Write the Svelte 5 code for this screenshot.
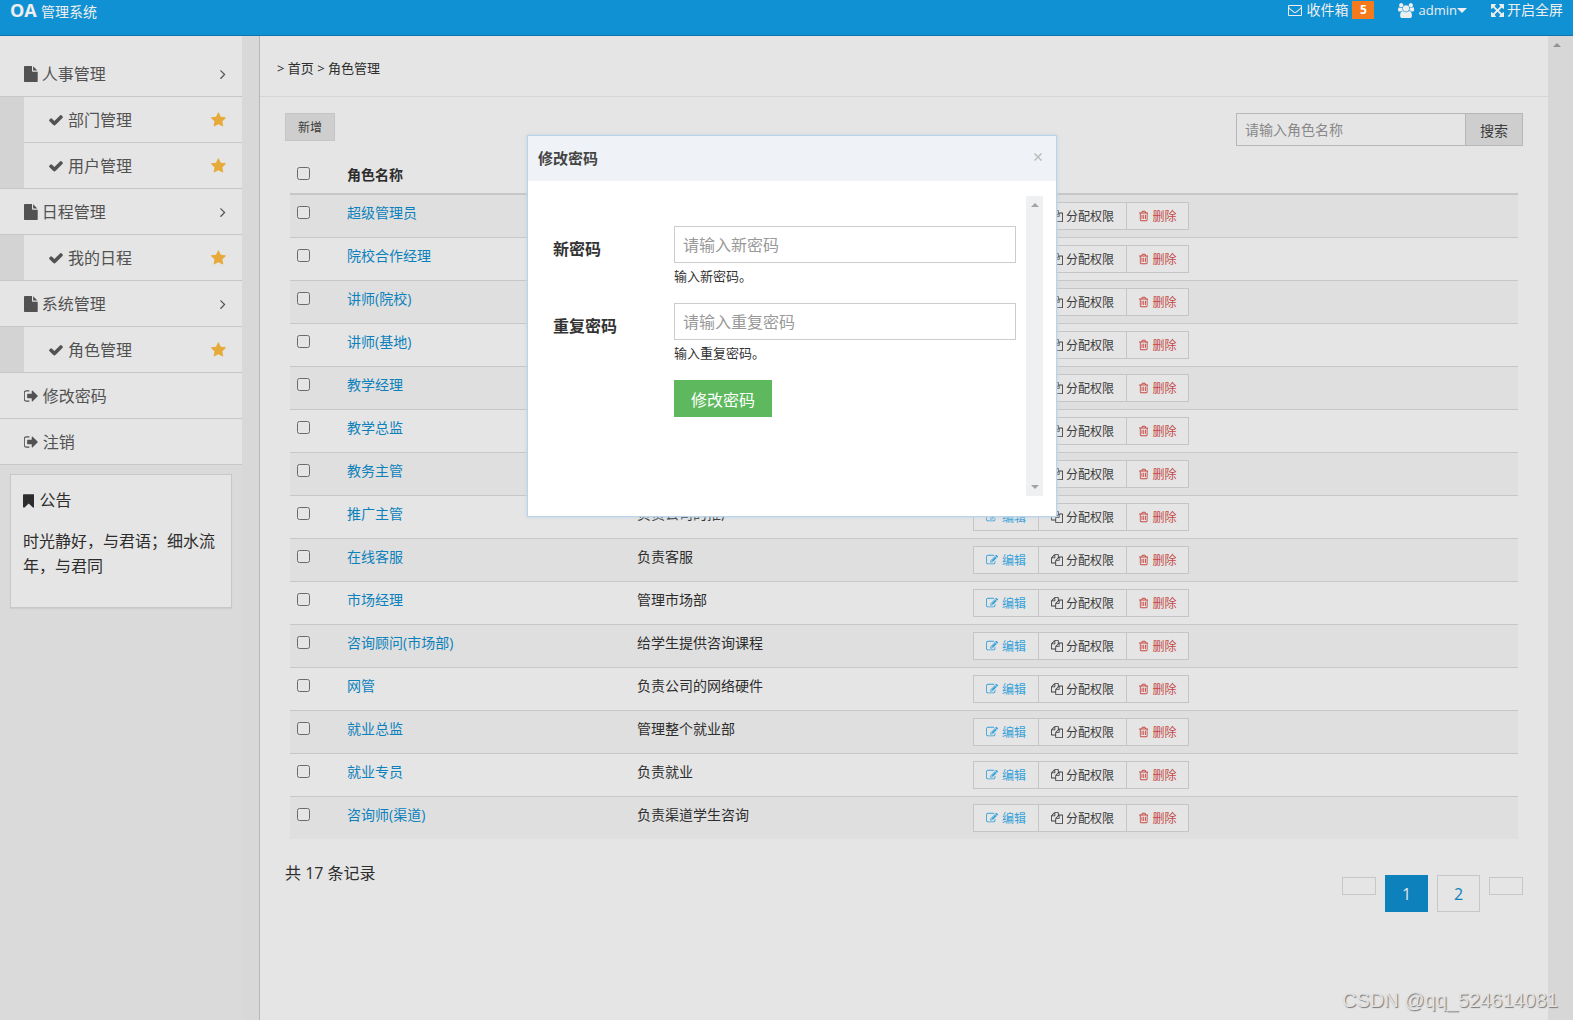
<script>
  const icons = {
    file: ['128 0 1536 1792', 'M1152 512v-472q22 14 36 28l408 408q14 14 28 36h-472zm-128 32q0 40 28 68t68 28h544v1056q0 40-28 68t-68 28h-1344q-40 0-68-28t-28-68v-1600q0-40 28-68t68-28h800v544z'],
    check: ['0 0 1792 1792', 'M1671 566q0 40-28 68l-724 724-136 136q-28 28-68 28t-68-28l-136-136-362-362q-28-28-28-68t28-68l136-136q28-28 68-28t68 28l294 295 656-657q28-28 68-28t68 28l136 136q28 28 28 68z'],
    star: ['64 0 1664 1792', 'M1728 647q0 22-26 48l-363 354 86 500q1 7 1 20 0 21-10.5 35.5t-30.5 14.5q-19 0-40-12l-449-236-449 236q-22 12-40 12-21 0-31.5-14.5t-10.5-35.5q0-6 2-20l86-500-364-354q-25-27-25-48 0-37 56-46l502-73 225-455q19-41 49-41t49 41l225 455 502 73q56 9 56 46z'],
    angle: ['576 0 640 1792', 'M1171 960q0 13-10 23l-466 466q-10 10-23 10t-23-10l-50-50q-10-10-10-23t10-23l393-393-393-393q-10-10-10-23t10-23l50-50q10-10 23-10t23 10l466 466q10 10 10 23z'],
    signout: ['96 0 1664 1792', 'M704 1440q0 4 1 20t.5 26.5-3 23.5-10 19.5-20.5 6.5h-320q-119 0-203.5-84.5t-84.5-203.5v-704q0-119 84.5-203.5t203.5-84.5h320q13 0 22.5 9.5t9.5 22.5q0 4 1 20t.5 26.5-3 23.5-10 19.5-20.5 6.5h-320q-66 0-113 47t-47 113v704q0 66 47 113t113 47h312l11.5 1 11.5 3 8 5.5 7 9 2 13.5zm928-544q0 26-19 45l-544 544q-19 19-45 19t-45-19-19-45v-288h-448q-26 0-45-19t-19-45v-384q0-26 19-45t45-19h448v-288q0-26 19-45t45-19 45 19l544 544q19 19 19 45z'],
    bookmark: ['256 0 1280 1792', 'M1420 128q23 0 44 9 33 13 52.5 41t19.5 62v1289q0 34-19.5 62t-52.5 41q-19 8-44 8-48 0-83-32l-441-424-441 424q-36 33-83 33-23 0-44-9-33-13-52.5-41t-19.5-62v-1289q0-34 19.5-62t52.5-41q21-9 44-9h1048z'],
    mail: ['0 0 1792 1792', 'M1664 1504v-768q-32 36-69 66-268 206-426 338-51 43-83 67t-86.5 48.5-102.5 24.5h-2q-48 0-102.5-24.5t-86.5-48.5-83-67q-158-132-426-338-37-30-69-66v768q0 13 9.5 22.5t22.5 9.5h1472q13 0 22.5-9.5t9.5-22.5zm0-1051v-24.5l-.5-13-3-12.5-5.5-9-9-7.5-14-2.5h-1472q-13 0-22.5 9.5t-9.5 22.5q0 168 147 284 193 152 401 317 6 5 35 29.5t46 37.5 44.5 31.5 50.5 27.5 43 9h2q20 0 43-9t50.5-27.5 44.5-31.5 46-37.5 35-29.5q208-165 401-317 54-43 100.5-115.5t46.5-131.5zm128-37v1088q0 66-47 113t-113 47h-1472q-66 0-113-47t-47-113v-1088q0-66 47-113t113-47h1472q66 0 113 47t47 113z'],
    expand: ['128 128 1536 1536', 'M1411 541l-355 355 355 355 144-144q29-31 70-14 39 17 39 59v448q0 26-19 45t-45 19h-448q-42 0-59-40-17-39 14-69l144-144-355-355-355 355 144 144q31 30 14 69-17 40-59 40h-448q-26 0-45-19t-19-45v-448q0-42 40-59 39-17 69 14l144 144 355-355-355-355-144 144q-19 19-45 19-12 0-24-5-40-17-40-59v-448q0-26 19-45t45-19h448q42 0 59 40 17 39-14 69l-144 144 355 355 355-355-144-144q-31-30-14-69 17-40 59-40h448q26 0 45 19t19 45v448q0 42-39 59-13 5-25 5-26 0-45-19z'],
    users: ['64 0 1920 1792', 'M657 896q-162 5-265 128h-134q-82 0-138-40.5t-56-118.5q0-353 124-353 6 0 43.5 21t97.5 42.5 119 21.5q67 0 133-23-5 37-5 66 0 159 93 293zm1071 637q0 120-73 189.5t-194 69.5h-874q-121 0-194-69.5t-73-189.5q0-53 3.5-103.5t14-109 26.5-108.5 43-97.5 62-81 85.5-53.5 111.5-20q10 0 43 21.5t73 48 107 48 135 21.5 135-21.5 107-48 73-48 43-21.5q61 0 111.5 20t85.5 53.5 62 81 43 97.5 26.5 108.5 14 109 3.5 103.5zm-1024-1277q0 106-75 181t-181 75-181-75-75-181 75-181 181-75 181 75 75 181zm704 384q0 159-112.5 271.5t-271.5 112.5-271.5-112.5-112.5-271.5 112.5-271.5 271.5-112.5 271.5 112.5 112.5 271.5zm576 225q0 78-56 118.5t-138 40.5h-134q-103-123-265-128 93-134 93-293 0-29-5-66 66 23 133 23 59 0 119-21.5t97.5-42.5 43.5-21q124 0 124 353zm-128-609q0 106-75 181t-181 75-181-75-75-181 75-181 181-75 181 75 75 181z'],
    edit: ['0 0 1792 1792', 'M888 1184l116-116-152-152-116 116v56h96v96h56zm440-720q-16-16-33 1l-350 350q-17 17-1 33t33-1l350-350q17-17 1-33zm80 594v190q0 119-84.5 203.5t-203.5 84.5h-832q-119 0-203.5-84.5t-84.5-203.5v-832q0-119 84.5-203.5t203.5-84.5h832q63 0 117 25 15 7 18 23 3 17-9 29l-49 49q-14 14-32 8-23-6-45-6h-832q-66 0-113 47t-47 113v832q0 66 47 113t113 47h832q66 0 113-47t47-113v-126q0-13 9-22l64-64q15-15 35-7t20 29zm-96-738l288 288-672 672h-288v-288zm444 132l-92 92-288-288 92-92q28-28 68-28t68 28l152 152q28 28 28 68t-28 68z'],
    copy: ['0 0 1792 1792', 'M1696 384q40 0 68 28t28 68v1216q0 40-28 68t-68 28h-960q-40 0-68-28t-28-68v-288h-544q-40 0-68-28t-28-68v-672q0-40 20-88t48-76l408-408q28-28 76-48t88-20h416q40 0 68 28t28 68v328q68-40 128-40h416zm-544 213l-299 299h299v-299zm-640-384l-299 299h299v-299zm196 647l316-316v-416h-384v416q0 40-28 68t-68 28h-416v640h512v-256q0-40 20-88t48-76zm956 804v-1152h-384v416q0 40-28 68t-68 28h-416v640h896z'],
    trash: ['192 0 1408 1792', 'M704 736v576q0 14-9 23t-23 9h-64q-14 0-23-9t-9-23v-576q0-14 9-23t23-9h64q14 0 23 9t9 23zm256 0v576q0 14-9 23t-23 9h-64q-14 0-23-9t-9-23v-576q0-14 9-23t23-9h64q14 0 23 9t9 23zm256 0v576q0 14-9 23t-23 9h-64q-14 0-23-9t-9-23v-576q0-14 9-23t23-9h64q14 0 23 9t9 23zm128 724v-948h-896v948q0 22 7 40.5t14.5 27 10.5 8.5h832q3 0 10.5-8.5t14.5-27 7-40.5zm-672-1076h448l-48-117q-7-9-17-11h-317q-10 2-17 11zm928 32v64q0 14-9 23t-23 9h-96v948q0 83-47 143.5t-113 60.5h-832q-66 0-113-58.5t-47-141.5v-952h-96q-14 0-23-9t-9-23v-64q0-14 9-23t23-9h309l70-167q15-37 54-63t79-26h320q40 0 79 26t54 63l70 167h309q14 0 23 9t9 23z']
  }

  const menu = [
    { titulo: '人事管理', hijos: ['部门管理', '用户管理'] },
    { titulo: '日程管理', hijos: ['我的日程'] },
    { titulo: '系统管理', hijos: ['角色管理'] }
  ]

  const roles = [
    { name: '超级管理员', desc: '' },
    { name: '院校合作经理', desc: '' },
    { name: '讲师(院校)', desc: '' },
    { name: '讲师(基地)', desc: '' },
    { name: '教学经理', desc: '' },
    { name: '教学总监', desc: '' },
    { name: '教务主管', desc: '' },
    { name: '推广主管', desc: '负责公司的推广' },
    { name: '在线客服', desc: '负责客服' },
    { name: '市场经理', desc: '管理市场部' },
    { name: '咨询顾问(市场部)', desc: '给学生提供咨询课程' },
    { name: '网管', desc: '负责公司的网络硬件' },
    { name: '就业总监', desc: '管理整个就业部' },
    { name: '就业专员', desc: '负责就业' },
    { name: '咨询师(渠道)', desc: '负责渠道学生咨询' }
  ]

  let keyword = $state('')
  let password = $state('')
  let repeat = $state('')
  let showModal = $state(true)
</script>

{#snippet icon(name, cls)}
  <svg class="icon {cls}" viewBox={icons[name][0]} aria-hidden="true"><path d={icons[name][1]} /></svg>
{/snippet}

<div class="page">
  <header>
    <div class="brand"><strong>OA</strong> <small>管理系统</small></div>
    <nav class="top">
      <a href="#inbox">{@render icon('mail', 'i14')}收件箱 <span class="badge">5</span></a>
      <a href="#admin">{@render icon('users', 'i15')}<span class="user">admin</span><span class="caret"></span></a>
      <a class="full" href="#full">{@render icon('expand', 'i13')}开启全屏</a>
    </nav>
  </header>

  <div class="body">
    <aside>
      <ul class="menu">
        {#each menu as m}
          <li>
            <a href="#menu">{@render icon('file', 'i16')}{m.titulo}<span class="right">{@render icon('angle', 'i16')}</span></a>
            <ul class="sub">
              {#each m.hijos as h}
                <li><a href="#sub">{@render icon('check', 'i16')}{h}<span class="right star">{@render icon('star', 'i16')}</span></a></li>
              {/each}
            </ul>
          </li>
        {/each}
        <li><a href="#password">{@render icon('signout', 'i16')}修改密码</a></li>
        <li><a href="#logout">{@render icon('signout', 'i16')}注销</a></li>
      </ul>
      <section class="notice">
        <p>{@render icon('bookmark', 'i16')}公告</p>
        <p>时光静好，与君语；细水流年，与君同</p>
      </section>
    </aside>

    <main>
      <div class="crumb">&gt; <a href="#home">首页</a> &gt; <a href="#role">角色管理</a></div>
      <div class="tools">
        <button class="add">新增</button>
        <form class="search">
          <input type="text" aria-label="角色名称" placeholder="请输入角色名称" bind:value={keyword}>
          <button type="button">搜索</button>
        </form>
      </div>

      <table>
        <colgroup><col class="c1"><col class="c2"><col class="c3"><col></colgroup>
        <thead>
          <tr>
            <th><input type="checkbox" aria-label="全选"></th>
            <th>角色名称</th>
            <th></th>
            <th></th>
          </tr>
        </thead>
        <tbody>
          {#each roles as r}
            <tr>
              <td><input type="checkbox" aria-label={r.name}></td>
              <td><a href="#edit">{r.name}</a></td>
              <td>{r.desc}</td>
              <td>
                <div class="group">
                  <button class="edit">{@render icon('edit', 'i12')}编辑</button>
                  <button>{@render icon('copy', 'i12')}分配权限</button>
                  <button class="del">{@render icon('trash', 'i12')}删除</button>
                </div>
              </td>
            </tr>
          {/each}
        </tbody>
      </table>

      <div class="foot">
        <span>共 17 条记录</span>
        <nav class="pages">
          <a class="empty" href="#prev" aria-label="上一页"></a>
          <a class="num active" href="#1">1</a>
          <a class="num" href="#2">2</a>
          <a class="empty" href="#next" aria-label="下一页"></a>
        </nav>
      </div>
    </main>
    <div class="scroll"><span class="up"></span></div>
    <div class="mask"></div>
  </div>

  {#if showModal}
    <div class="modal" role="dialog" aria-label="修改密码">
      <div class="modal-head">
        <strong>修改密码</strong>
        <button class="close" aria-label="关闭" onclick={() => (showModal = false)}>
          <svg viewBox="0 0 8 8"><path d="M0.5 0.5L7.5 7.5M7.5 0.5L0.5 7.5" /></svg>
        </button>
      </div>
      <div class="modal-body">
        <form>
          <label for="pwd">新密码</label>
          <div class="field">
            <input id="pwd" type="password" placeholder="请输入新密码" bind:value={password}>
            <small>输入新密码。</small>
          </div>
          <label for="pwd2">重复密码</label>
          <div class="field">
            <input id="pwd2" type="password" placeholder="请输入重复密码" bind:value={repeat}>
            <small>输入重复密码。</small>
          </div>
          <button type="button" class="submit">修改密码</button>
        </form>
        <div class="track"><span class="up"></span><span class="down"></span></div>
      </div>
    </div>
  {/if}

  <div class="mark">CSDN @qq_524614081</div>
</div>

<style>
  :global(body) {
    margin: 0;
    background: #d9d9d9;
  }

  .page {
    position: relative;
    display: flex;
    flex-direction: column;
    min-height: 100vh;
    font: 16px/26px "Open Sans", "Noto Sans CJK SC", sans-serif;
    color: #333;
  }

  .page :global(*) {
    box-sizing: border-box;
  }

  a {
    color: inherit;
    text-decoration: none;
  }

  ul {
    list-style: none;
    margin: 0;
    padding: 0;
  }

  button, input {
    font-family: inherit;
    border-radius: 0;
    margin: 0;
  }

  .icon {
    flex: none;
    fill: currentColor;
  }

  .i12 { height: 12px; }
  .i13 { height: 13px; }
  .i14 { height: 14px; }
  .i15 { height: 15px; }
  .i16 { height: 16px; }

  header {
    display: flex;
    justify-content: space-between;
    height: 36px;
    padding: 0 10px;
    background: #1091d4;
    border-bottom: 1px solid #0c75ab;
    color: #eee;
  }

  .brand {
    line-height: 20px;
  }

  .brand strong {
    font-size: 18px;
  }

  .brand small {
    font-size: 14px;
  }

  .top {
    display: flex;
    gap: 24px;
    font-size: 14px;
    line-height: 20px;
  }

  .top a {
    display: flex;
    align-items: center;
    gap: 4px;
    height: 20px;
  }

  .top .full {
    gap: 3px;
  }

  .user {
    font-size: 13px;
  }

  .badge {
    width: 22px;
    height: 18px;
    background: #f37b1d;
    color: #fff;
    font-size: 12px;
    font-weight: bold;
    line-height: 18px;
    text-align: center;
  }

  .caret {
    margin-left: -4px;
    border: 5px solid transparent;
    border-top-color: currentColor;
    border-bottom: 0;
  }

  .body {
    position: relative;
    flex: 1;
    display: flex;
    background: #f1f1f1;
  }

  aside {
    flex: none;
    width: 242px;
    background: #f3f3f3;
  }

  .menu {
    padding-top: 15px;
    background: #fff;
    color: #5c5c5c;
  }

  .menu a {
    display: flex;
    align-items: center;
    gap: 4px;
    height: 46px;
    padding: 0 16px 0 24px;
    border-bottom: 1px solid #dedede;
  }

  .sub {
    padding-left: 24px;
    background: #ebebeb;
  }

  .sub a {
    background: #fff;
  }

  .sub li:last-child {
    margin-left: -24px;
    border-bottom: 1px solid #dedede;
  }

  .sub li:last-child a {
    height: 45px;
    margin-left: 24px;
    border-bottom: 0;
  }

  .right {
    display: flex;
    margin-left: auto;
  }

  .star {
    color: #ffbe40;
  }

  .notice {
    margin: 9px 10px 0;
    padding: 13px 12px;
    height: 134px;
    background: #fff;
    border: 1px solid #dedede;
    box-shadow: 0 1px 1px rgba(0, 0, 0, .05);
    line-height: 25px;
  }

  .notice p {
    display: flex;
    gap: 5px;
    align-items: center;
    margin: 0 0 16px;
  }

  main {
    flex: 1;
    min-width: 0;
    margin-left: 17px;
    background: #fff;
    border-left: 1px solid #ccc;
  }

  .crumb {
    height: 61px;
    padding: 19px 17px 0;
    border-bottom: 1px solid #eee;
    font-size: 13px;
  }

  .tools {
    display: flex;
    justify-content: space-between;
    align-items: flex-start;
    padding: 16px 25px 0;
  }

  .add {
    height: 28px;
    padding: 0 12px;
    background: #e6e6e6;
    border: 1px solid #dcdcdc;
    color: #444;
    font-size: 12px;
  }

  .search {
    display: flex;
    height: 33px;
  }

  .search input {
    width: 230px;
    margin-right: -1px;
    padding: 0 8px;
    border: 1px solid #ccc;
    font-size: 14px;
  }

  ::placeholder {
    color: #999;
    opacity: 1;
  }

  .search button {
    width: 58px;
    padding: 0;
    background: #e6e6e6;
    border: 1px solid #ccc;
    color: #444;
    font-size: 14px;
  }

  table {
    width: calc(100% - 60px);
    margin: 9px 30px 0;
    table-layout: fixed;
    border-spacing: 0;
    font-size: 14px;
    line-height: 22px;
  }

  .c1 { width: 50px; }
  .c2 { width: 290px; }
  .c3 { width: 336px; }

  th, td {
    padding: 7px;
    vertical-align: top;
    text-align: left;
  }

  th {
    height: 39px;
    padding-top: 9px;
    border-bottom: 1px solid #dedede;
  }

  td {
    height: 43px;
    border-top: 1px solid #dedede;
  }

  tbody tr:nth-child(odd) {
    background: #f9f9f9;
  }

  td a {
    color: #0e90d2;
  }

  table input {
    display: block;
    width: 13px;
    height: 13px;
    margin: 4px 0 0;
  }

  th input {
    margin-top: 3px;
  }

  .group {
    display: flex;
  }

  .group button {
    display: flex;
    align-items: center;
    gap: 3px;
    height: 28px;
    padding: 0 12px;
    margin-right: -1px;
    background: #fff;
    border: 1px solid #dcdcdc;
    color: #444;
    font-size: 12px;
    white-space: nowrap;
  }

  .group .edit {
    color: #3bb4f2;
    gap: 4px;
  }

  .group .del {
    color: #dd514c;
    gap: 4px;
  }

  .foot {
    display: flex;
    justify-content: space-between;
    padding: 21px 25px 0;
  }

  .pages {
    display: flex;
    gap: 9px;
    padding-top: 15px;
  }

  .pages a {
    border: 1px solid #dedede;
    color: #0e90d2;
  }

  .empty {
    width: 34px;
    height: 18px;
    margin-top: 2px;
  }

  .num {
    width: 43px;
    height: 37px;
    line-height: 36px;
    text-align: center;
  }

  .pages .active {
    background: #0e90d2;
    border-color: #0e90d2;
    color: #fff;
  }

  .scroll {
    flex: none;
    width: 25px;
    padding: 7px 0 0 5px;
    background: #f0f0f0;
  }

  .up, .down {
    display: block;
    width: 8px;
    border: 4px solid transparent;
  }

  .up {
    border-top: 0;
    border-bottom-color: #a3a3a3;
  }

  .down {
    border-bottom: 0;
    border-top-color: #a3a3a3;
  }

  .mask {
    position: absolute;
    inset: 0;
    background: rgba(0, 0, 0, .1);
  }

  .modal {
    position: absolute;
    left: 527px;
    top: 135px;
    width: 530px;
    height: 382px;
    background: #fff;
    border: 1px solid #b8d3ea;
    box-shadow: 0 0 4px #c3d5e5;
  }

  .modal-head {
    display: flex;
    justify-content: space-between;
    height: 45px;
    padding: 0 14px 0 10px;
    background: #eff3f8;
    color: #444;
    font-size: 15px;
    line-height: 45px;
  }

  .close {
    display: flex;
    align-items: center;
    height: 42px;
    padding: 0;
    background: none;
    border: 0;
  }

  .close svg {
    width: 8px;
    stroke: #bbb;
    stroke-width: 1.5;
  }

  .modal-body {
    display: flex;
    gap: 10px;
    height: 300px;
    margin: 15px 13px 0 25px;
  }

  form {
    margin: 0;
  }

  .modal-body form {
    flex: 1;
    display: grid;
    grid-template-columns: 121px 1fr;
    align-content: start;
    padding-top: 30px;
  }

  .modal-body label {
    padding-top: 10px;
    font-weight: bold;
  }

  .field {
    height: 77px;
  }

  .field input {
    display: block;
    width: 100%;
    height: 37px;
    padding: 0 8px;
    border: 1px solid #ccc;
    font-size: 16px;
  }

  .field small {
    display: block;
    font-size: 13px;
  }

  .submit {
    grid-column: 2;
    justify-self: start;
    height: 37px;
    padding: 0 17px;
    background: #5eb95e;
    border: 0;
    color: #fff;
    font-size: 16px;
  }

  .track {
    display: flex;
    flex-direction: column;
    justify-content: space-between;
    align-items: center;
    width: 17px;
    padding: 7px 0;
    background: #eff0f2;
  }

  .mark {
    position: absolute;
    right: 15px;
    bottom: 7px;
    color: #e2e2e2;
    font: 20px/26px "Liberation Sans", sans-serif;
    text-shadow: 1px 1px 1px #777;
  }
</style>
